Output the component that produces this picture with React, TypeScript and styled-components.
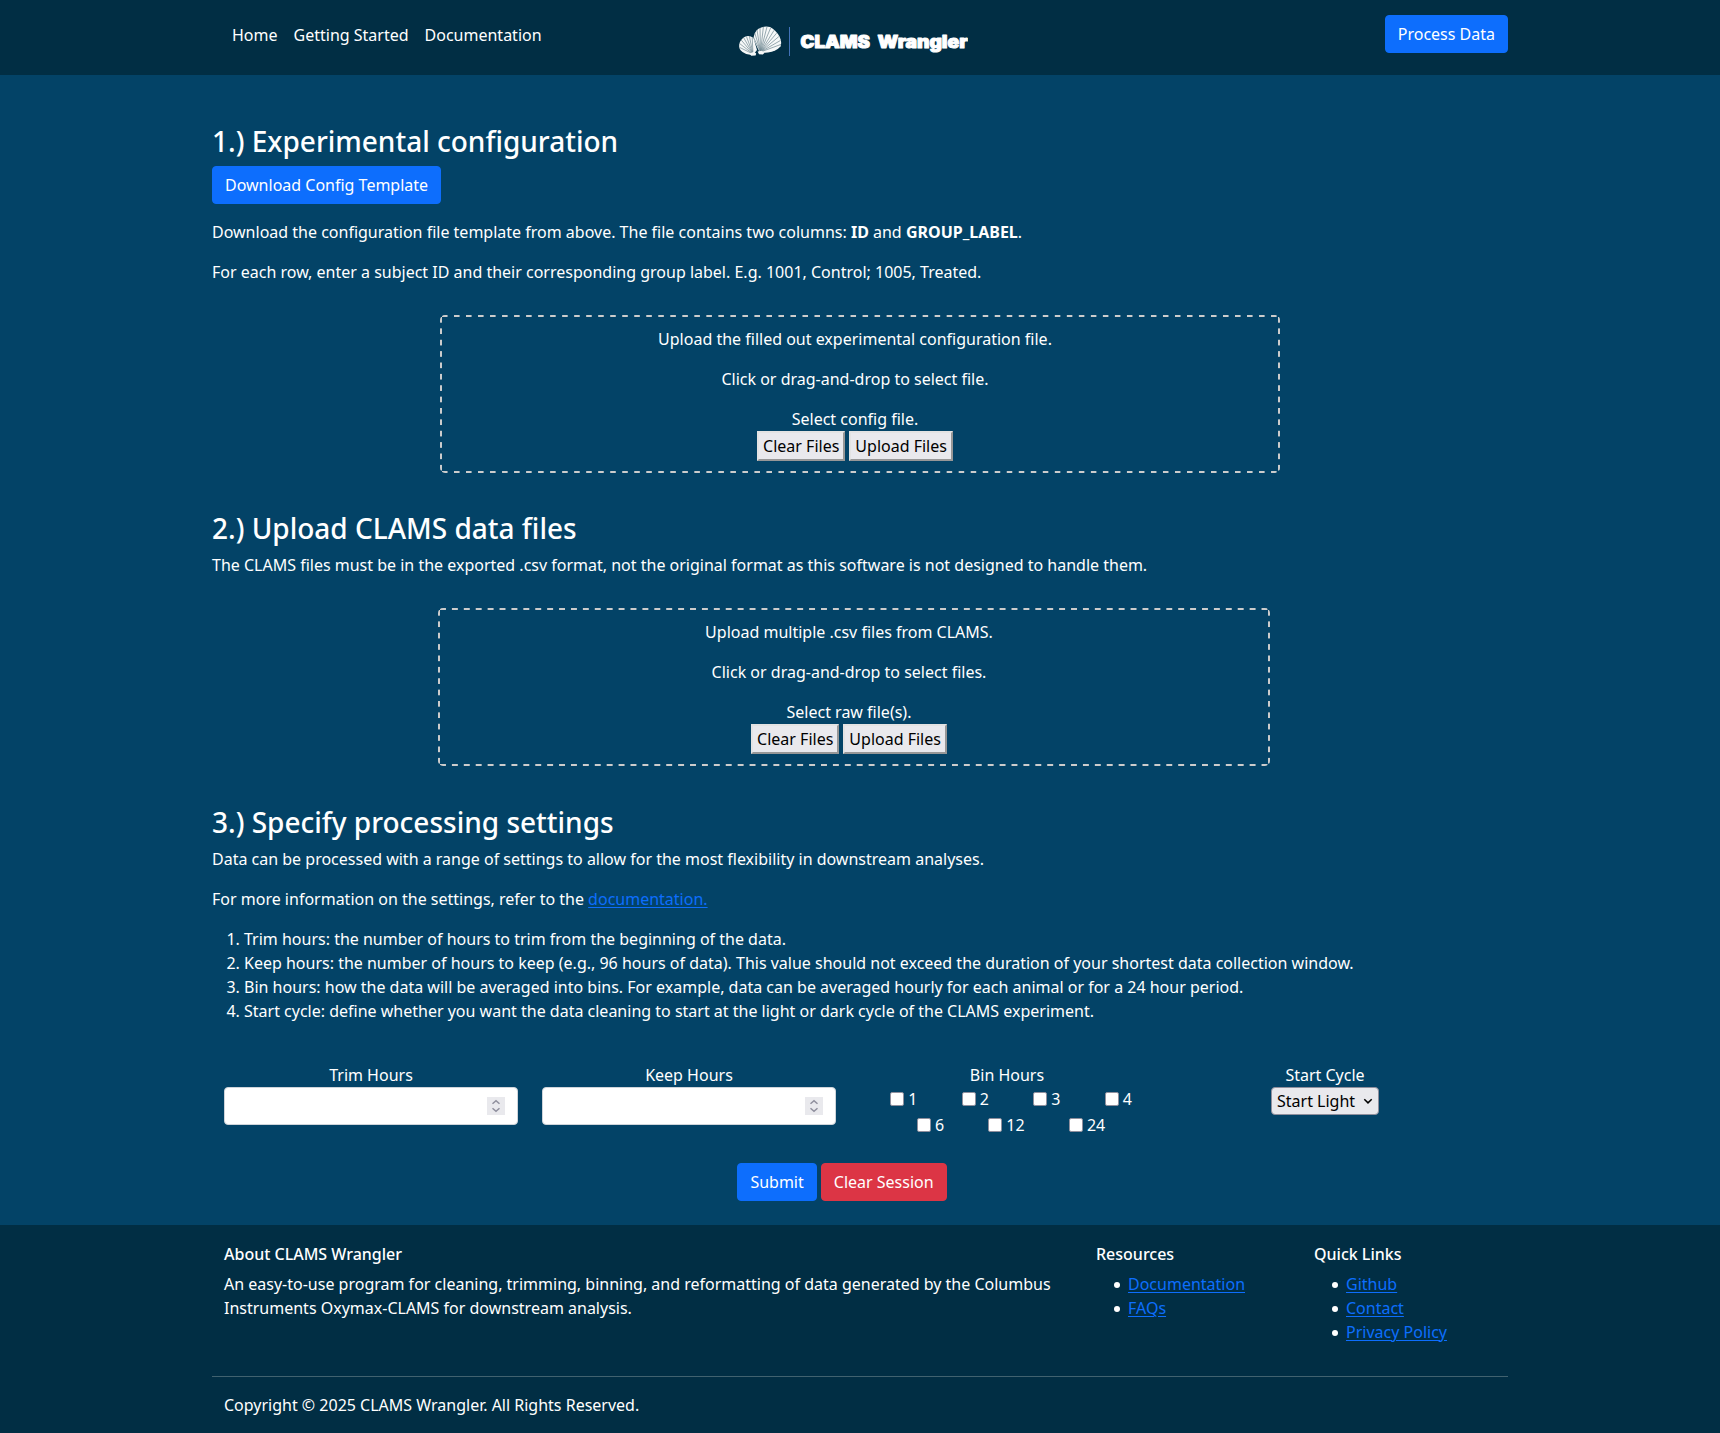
import React from 'react';
import styled, { createGlobalStyle } from 'styled-components';

const GlobalStyle = createGlobalStyle`
  *, *::before, *::after { box-sizing: border-box; }
  body {
    margin: 0;
    background: #034367;
    color: #fff;
    font-family: "Noto Sans", "Liberation Sans", sans-serif;
    font-size: 16px;
    line-height: 24px;
  }
`;

const Page = styled.div`
  display: flex;
  flex-direction: column;
`;

const Container = styled.div`
  width: 1296px;
  margin: 0 auto;
`;

const Header = styled.header`
  height: 75px;
  background: #012e44;
`;

const HeaderInner = styled(Container)`
  display: grid;
  grid-template-columns: 1fr auto 1fr;
  align-items: start;
  padding-top: 15px;
`;

const Nav = styled.nav`
  display: flex;
  gap: 16px;
  padding: 8px 0 0 20px;
`;

const NavLink = styled.a`
  color: #fff;
  text-decoration: none;
`;

const LogoSvg = styled.svg`
  display: block;
  margin: 7px 14px 0 0;
`;

const Button = styled.button<{ $danger?: boolean }>`
  height: 38px;
  padding: 6px 12px;
  border: 1px solid ${p => (p.$danger ? '#dc3545' : '#0d6efd')};
  border-radius: 4px;
  background: ${p => (p.$danger ? '#dc3545' : '#0d6efd')};
  color: #fff;
  font: inherit;
`;

const HeaderButton = styled(Button)`
  justify-self: end;
`;

const Main = styled(Container)`
  height: 1150px;
  padding-top: 49px;
`;

const Section = styled.section<{ $gap?: number }>`
  margin-bottom: ${p => p.$gap ?? 0}px;
`;

const Title = styled.h3`
  margin: 0 0 8px;
  font-size: 28px;
  font-weight: 500;
  line-height: 34px;
`;

const Text = styled.p`
  margin: 0 0 16px;
`;

const TemplateButton = styled(Button)`
  display: block;
  margin-bottom: 16px;
`;

const dashX = 'linear-gradient(90deg, #ccc 6px, transparent 6px)';
const dashY = 'linear-gradient(180deg, #ccc 6px, transparent 6px)';

const DropZone = styled.div<{ $width: number; $left: number }>`
  display: flex;
  flex-direction: column;
  align-items: center;
  width: ${p => p.$width}px;
  height: 158px;
  margin: 31px 0 0 ${p => p.$left}px;
  padding: 12px 22px 12px 12px;
  background-image: ${dashX}, ${dashX}, ${dashY}, ${dashY};
  background-repeat: repeat-x, repeat-x, repeat-y, repeat-y;
  background-position: 2px 0, 2px 100%, 0 2px, 100% 2px;
  background-size:
    ${p => (p.$width - 10) / 69}px 2px,
    ${p => (p.$width - 10) / 69}px 2px,
    2px 11.38px,
    2px 11.38px;
  border-radius: 5px;
  text-align: center;
`;

const FileButtons = styled.div`
  display: flex;
  gap: 4px;
`;

const FileButton = styled.button`
  height: 30px;
  padding: 1px 4px;
  border: 2px solid;
  border-color: #e3e3e3 #979797 #979797 #e3e3e3;
  background: #e9e9ed;
  color: #000;
  font: inherit;
`;

const Link = styled.a`
  color: #0d6efd;
  text-decoration: underline;
  text-decoration-thickness: 1px;
  text-underline-offset: 2px;
`;

const Steps = styled.ol`
  margin: 0 0 40px;
  padding-left: 32px;
`;

const Fields = styled.div`
  display: grid;
  grid-template-columns: repeat(4, 318px);
  height: 100px;
`;

const Field = styled.div`
  display: flex;
  flex-direction: column;
  align-items: center;
  padding: 0 12px;
`;

const NumberBox = styled.div`
  display: flex;
  align-items: center;
  justify-content: flex-end;
  width: 100%;
  height: 38px;
  padding-right: 12px;
  border: 1px solid #ced4da;
  border-radius: 4px;
  background: #fff;
`;

const Spinner = styled.svg`
  display: block;
  background: #e9e9ed;
`;

const Checks = styled.div`
  display: flex;
  flex-wrap: wrap;
  justify-content: center;
  width: 294px;
`;

const Check = styled.label`
  display: flex;
  align-items: center;
  gap: 4px;
  height: 26px;
  padding: 0 18.1px 2px 26.2px;
`;

const CheckInput = styled.input`
  appearance: none;
  width: 14px;
  height: 14px;
  margin: 0;
  border: 1px solid #8f8f9d;
  border-radius: 2px;
  background: #fff;
`;

const SelectBox = styled.button`
  display: flex;
  align-items: center;
  justify-content: space-between;
  width: 108px;
  height: 28px;
  padding: 0 5px;
  border: 1px solid #8f8f9d;
  border-radius: 4px;
  background: #e9e9ed;
  color: #000;
  font: inherit;
`;

const Actions = styled.div`
  display: flex;
  justify-content: center;
  gap: 4px;
  padding-right: 36px;
`;

const Footer = styled.footer`
  height: 208px;
  padding-top: 19px;
  background: #012e44;
`;

const FooterColumns = styled.div`
  display: grid;
  grid-template-columns: 872px 218px 206px;
  height: 133px;
  border-bottom: 1px solid #41626f;
`;

const FooterColumn = styled.div`
  padding: 0 12px;
`;

const FooterTitle = styled.h6`
  margin: 0 0 8px;
  font-size: 16px;
  font-weight: 500;
  line-height: 20px;
`;

const LinkList = styled.ul`
  margin: 0;
  padding-left: 18px;
  list-style: none;
`;

const LinkItem = styled.li`
  display: flex;
  gap: 8px;

  &::before {
    content: '';
    width: 6px;
    height: 6px;
    margin-top: 10px;
    border-radius: 50%;
    background: #fff;
  }
`;

const Copyright = styled.div`
  padding: 16px 12px 0;
`;

const LEFT_GROOVES = [
  [1.8, 25.5],
  [1.6, 21.5],
  [3.2, 18],
  [5.6, 15.6],
  [8.4, 14.4],
  [11.4, 14.2],
  [14.2, 15.6],
];

const RIGHT_GROOVES = [
  [15.4, 15],
  [16.8, 11],
  [19, 8],
  [22, 6],
  [25.4, 4.8],
  [29, 4.8],
  [32.6, 6],
  [36, 8.4],
  [38.6, 11.2],
  [40.8, 14.6],
  [42.6, 18.4],
  [43, 22.4],
];

function Logo() {
  return (
    <LogoSvg width="230" height="38" viewBox="0 0 230 38">
      <g fill="#f6f8f8" strokeWidth=".7">
        <path d="M15 33Q9 33.5 4.5 30Q.6 27.5 1.2 22.5Q2 17.5 6.5 15Q11 12.8 15.5 16L19 28Z" />
        <g stroke="#6f8791">
          {LEFT_GROOVES.map(([x, y]) => (
            <path key={x} d={`M15 32L${x} ${y}`} />
          ))}
        </g>
        <path d="M22 31Q18 23 15.5 17Q16 10 20.5 6.8Q26 3.4 32 5Q38 8.2 41.5 14.5Q44.2 20 42.5 24.5Q38 29.5 30 30.5Z" />
        <g stroke="#6f8791">
          {RIGHT_GROOVES.map(([x, y]) => (
            <path key={x} d={`M22.5 30L${x} ${y}`} />
          ))}
        </g>
        <path d="M11.5 31.5l4.5-1.8 2.2 1.8-.6 2-4.4.3z" />
        <path d="M19.6 29.6l4.4-.8 2.4 2.2-1.6 1.6-3.8-.3z" />
      </g>
      <path d="M51.5 5v29" stroke="#4272b8" strokeWidth="1" />
      <g
        fill="#fff"
        stroke="#fff"
        strokeWidth="1"
        strokeLinejoin="round"
        fontFamily="Inter, sans-serif"
        fontWeight="900"
        fontSize="17"
      >
        <text x="62.5" y="26" textLength="69.5" lengthAdjust="spacingAndGlyphs">
          CLAMS
        </text>
        <text x="139.5" y="26" textLength="90" lengthAdjust="spacingAndGlyphs">
          Wrangler
        </text>
      </g>
    </LogoSvg>
  );
}

function NumberField({ label }: { label: string }) {
  return (
    <Field>
      <span>{label}</span>
      <NumberBox>
        <Spinner width="18" height="18" viewBox="0 0 18 18" fill="none" stroke="#8f8f9d" strokeWidth="1.5">
          <path d="M5.5 6.8L9 3.7l3.5 3.1M5.5 11.2L9 14.3l3.5-3.1" />
        </Spinner>
      </NumberBox>
    </Field>
  );
}

interface UploadProps {
  width: number;
  left: number;
  lines: [string, string];
  status: string;
}

function Upload({ width, left, lines, status }: UploadProps) {
  return (
    <DropZone $width={width} $left={left}>
      <Text>{lines[0]}</Text>
      <Text>{lines[1]}</Text>
      <span>{status}</span>
      <FileButtons>
        <FileButton>Clear Files</FileButton>
        <FileButton>Upload Files</FileButton>
      </FileButtons>
    </DropZone>
  );
}

export default function App() {
  return (
    <Page>
      <GlobalStyle />
      <Header>
        <HeaderInner>
          <Nav>
            <NavLink>Home</NavLink>
            <NavLink>Getting Started</NavLink>
            <NavLink>Documentation</NavLink>
          </Nav>
          <Logo />
          <HeaderButton>Process Data</HeaderButton>
        </HeaderInner>
      </Header>
      <Main>
        <Section $gap={38}>
          <Title>1.) Experimental configuration</Title>
          <TemplateButton>Download Config Template</TemplateButton>
          <Text>
            Download the configuration file template from above. The file contains two columns: <b>ID</b> and{' '}
            <b>GROUP_LABEL</b>.
          </Text>
          <Text>
            For each row, enter a subject ID and their corresponding group label. E.g. 1001, Control; 1005, Treated.
          </Text>
          <Upload
            width={840}
            left={228}
            lines={['Upload the filled out experimental configuration file.', 'Click or drag-and-drop to select file.']}
            status="Select config file."
          />
        </Section>
        <Section $gap={39}>
          <Title>2.) Upload CLAMS data files</Title>
          <Text>
            The CLAMS files must be in the exported .csv format, not the original format as this software is not
            designed to handle them.
          </Text>
          <Upload
            width={832}
            left={226}
            lines={['Upload multiple .csv files from CLAMS.', 'Click or drag-and-drop to select files.']}
            status="Select raw file(s)."
          />
        </Section>
        <Section>
          <Title>3.) Specify processing settings</Title>
          <Text>
            Data can be processed with a range of settings to allow for the most flexibility in downstream analyses.
          </Text>
          <Text>
            For more information on the settings, refer to the <Link>documentation.</Link>
          </Text>
          <Steps>
            <li>Trim hours: the number of hours to trim from the beginning of the data.</li>
            <li>
              Keep hours: the number of hours to keep (e.g., 96 hours of data). This value should not exceed the
              duration of your shortest data collection window.
            </li>
            <li>
              Bin hours: how the data will be averaged into bins. For example, data can be averaged hourly for each
              animal or for a 24 hour period.
            </li>
            <li>
              Start cycle: define whether you want the data cleaning to start at the light or dark cycle of the CLAMS
              experiment.
            </li>
          </Steps>
          <Fields>
            <NumberField label="Trim Hours" />
            <NumberField label="Keep Hours" />
            <Field>
              <span>Bin Hours</span>
              <Checks>
                {[1, 2, 3, 4, 6, 12, 24].map(n => (
                  <Check key={n}>
                    <CheckInput type="checkbox" />
                    {n}
                  </Check>
                ))}
              </Checks>
            </Field>
            <Field>
              <span>Start Cycle</span>
              <SelectBox>
                Start Light
                <svg width="10" height="10" viewBox="0 0 10 10" fill="none" stroke="#000" strokeWidth="1.5">
                  <path d="M1.3 3.2L5 6.9l3.7-3.7" />
                </svg>
              </SelectBox>
            </Field>
          </Fields>
          <Actions>
            <Button>Submit</Button>
            <Button $danger>Clear Session</Button>
          </Actions>
        </Section>
      </Main>
      <Footer>
        <Container>
          <FooterColumns>
            <FooterColumn>
              <FooterTitle>About CLAMS Wrangler</FooterTitle>
              <Text>
                An easy-to-use program for cleaning, trimming, binning, and reformatting of data generated by the
                Columbus Instruments Oxymax-CLAMS for downstream analysis.
              </Text>
            </FooterColumn>
            <FooterColumn>
              <FooterTitle>Resources</FooterTitle>
              <LinkList>
                <LinkItem><Link>Documentation</Link></LinkItem>
                <LinkItem><Link>FAQs</Link></LinkItem>
              </LinkList>
            </FooterColumn>
            <FooterColumn>
              <FooterTitle>Quick Links</FooterTitle>
              <LinkList>
                <LinkItem><Link>Github</Link></LinkItem>
                <LinkItem><Link>Contact</Link></LinkItem>
                <LinkItem><Link>Privacy Policy</Link></LinkItem>
              </LinkList>
            </FooterColumn>
          </FooterColumns>
          <Copyright>Copyright © 2025 CLAMS Wrangler. All Rights Reserved.</Copyright>
        </Container>
      </Footer>
    </Page>
  );
}
